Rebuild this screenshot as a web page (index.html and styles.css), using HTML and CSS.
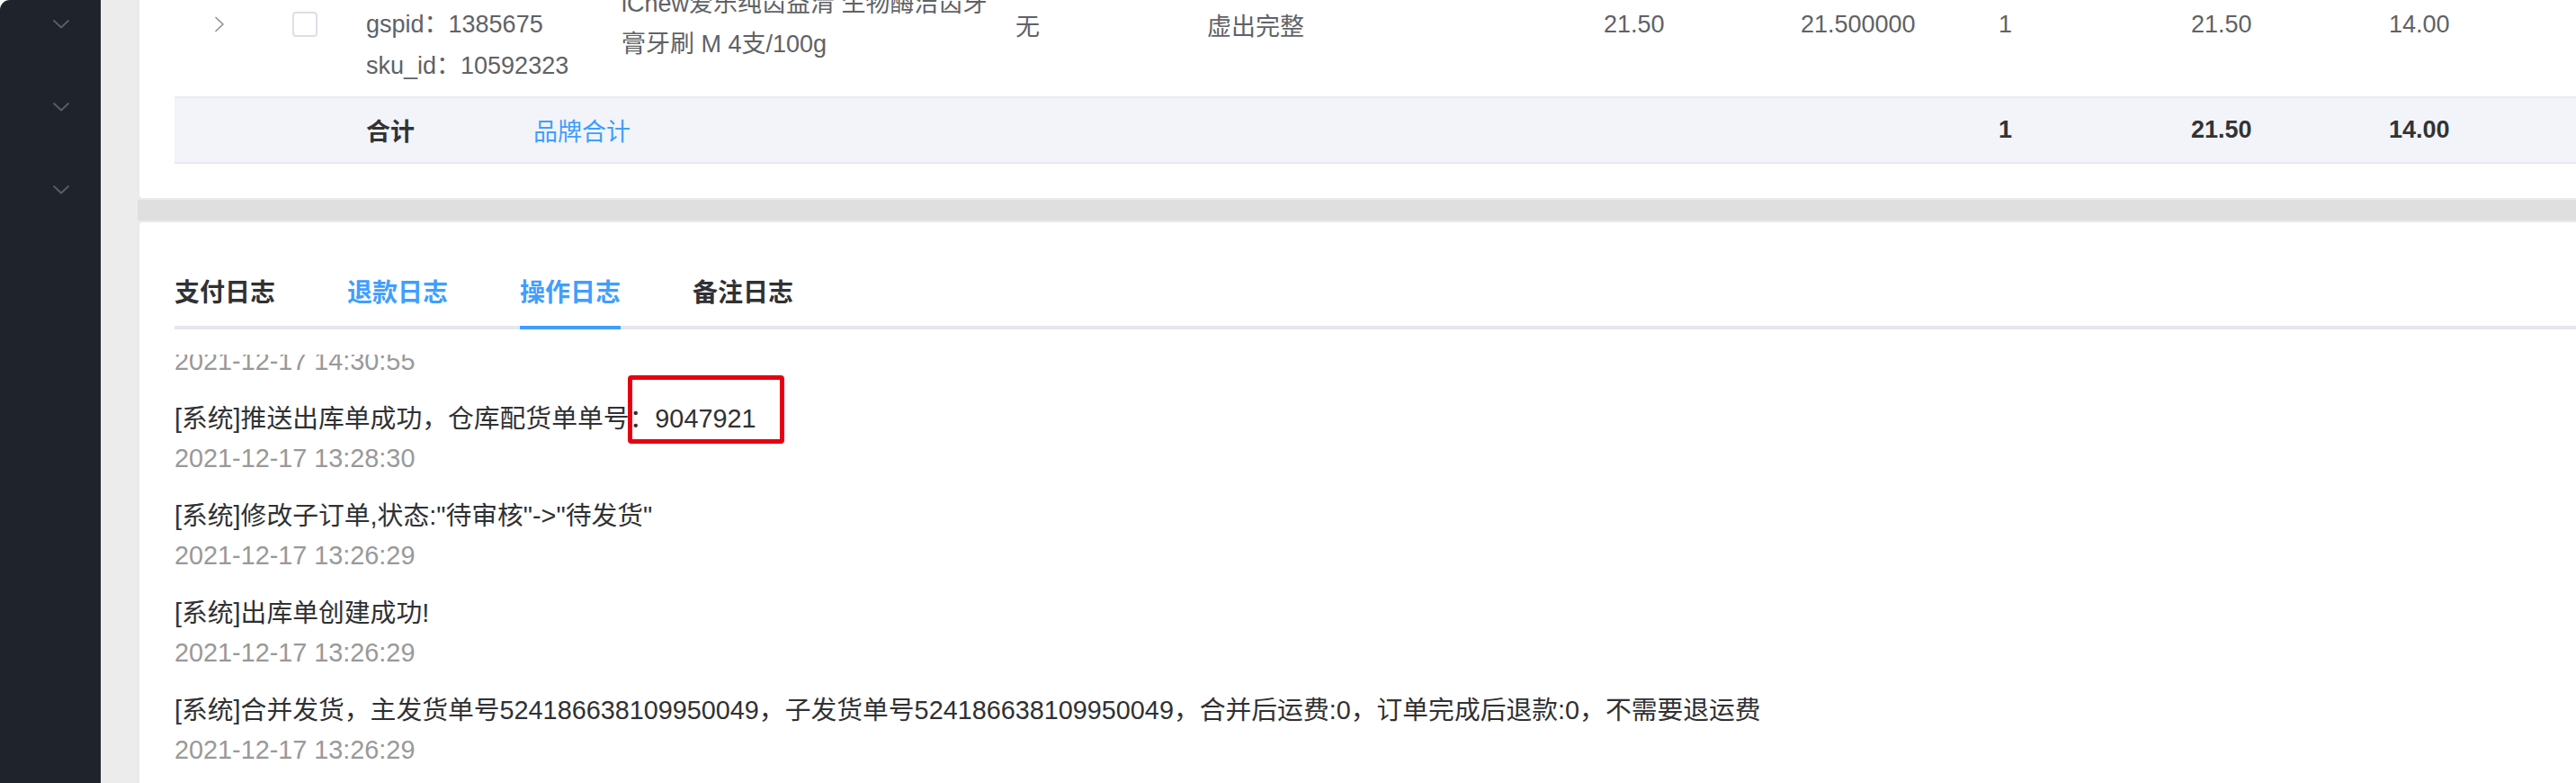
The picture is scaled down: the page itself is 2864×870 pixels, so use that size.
FILE: index.html
```html
<!DOCTYPE html>
<html lang="zh-CN">
<head>
<meta charset="utf-8">
<title>订单详情</title>
<link rel="stylesheet" href="styles.css">
</head>
<body>
<div class="app">
  <aside class="sidebar">
    <div class="menu-item first"><svg class="chev" width="18" height="10" viewBox="0 0 18 10"><polyline points="1,1 9,8.5 17,1"/></svg></div>
    <div class="menu-item"><svg class="chev" width="18" height="10" viewBox="0 0 18 10"><polyline points="1,1 9,8.5 17,1"/></svg></div>
    <div class="menu-item"><svg class="chev" width="18" height="10" viewBox="0 0 18 10"><polyline points="1,1 9,8.5 17,1"/></svg></div>
  </aside>
  <main class="main">
    <section class="card card-goods">
      <div class="table">
        <div class="row data-row">
          <div class="cell cell-center"><svg class="expand" width="12" height="18" viewBox="0 0 12 18"><polyline points="2,1.5 10,9 2,16.5"/></svg></div>
          <div class="cell cell-center"><span class="checkbox"></span></div>
          <div class="cell cell-ids">
            <div>gspid：1385675</div>
            <div>sku_id：10592323</div>
          </div>
          <div class="cell cell-name">iChew爱乐纯齿益清 生物酶洁齿牙<br>膏牙刷 M 4支/100g</div>
          <div class="cell">无</div>
          <div class="cell">虚出完整</div>
          <div class="cell">21.50</div>
          <div class="cell">21.500000</div>
          <div class="cell">1</div>
          <div class="cell">21.50</div>
          <div class="cell">14.00</div>
        </div>
        <div class="row sum-row">
          <div class="cell"></div>
          <div class="cell"></div>
          <div class="cell cell-sum"><span class="sum-label">合计</span><span class="brand-link">品牌合计</span></div>
          <div class="cell"></div>
          <div class="cell"></div>
          <div class="cell"></div>
          <div class="cell"></div>
          <div class="cell"></div>
          <div class="cell strong">1</div>
          <div class="cell strong">21.50</div>
          <div class="cell strong">14.00</div>
        </div>
      </div>
    </section>
    <div class="gap-band"></div>
    <section class="card card-logs">
      <div class="tabs-nav">
        <div class="tab first">支付日志</div>
        <div class="tab hover">退款日志</div>
        <div class="tab active">操作日志</div>
        <div class="tab">备注日志</div>
      </div>
      <div class="log-scroll">
        <div class="log-list">
          <div class="log-entry partial">
            <div class="log-time">2021-12-17 14:30:55</div>
          </div>
          <div class="log-entry">
            <div class="log-text marked">[系统]推送出库单成功，仓库配货单单号：9047921<span class="mark-box"></span></div>
            <div class="log-time">2021-12-17 13:28:30</div>
          </div>
          <div class="log-entry">
            <div class="log-text">[系统]修改子订单,状态:"待审核"-&gt;"待发货"</div>
            <div class="log-time">2021-12-17 13:26:29</div>
          </div>
          <div class="log-entry">
            <div class="log-text">[系统]出库单创建成功!</div>
            <div class="log-time">2021-12-17 13:26:29</div>
          </div>
          <div class="log-entry">
            <div class="log-text">[系统]合并发货，主发货单号524186638109950049，子发货单号524186638109950049，合并后运费:0，订单完成后退款:0，不需要退运费</div>
            <div class="log-time">2021-12-17 13:26:29</div>
          </div>
        </div>
      </div>
    </section>
  </main>
</div>
</body>
</html>
```
FILE: styles.css
```css
* { box-sizing: border-box; }
html, body { margin: 0; padding: 0; }
body {
  background: #ffffff;
  font-family: "Liberation Sans", "Noto Sans CJK SC", sans-serif;
  color: #303133;
}
.app {
  display: flex;
  width: 2864px;
  height: 870px;
  overflow: hidden;
}
.sidebar {
  width: 112px;
  flex: none;
  background: #1f232b;
  border-top-left-radius: 11px;
  display: flex;
  flex-direction: column;
}
.menu-item {
  height: 92px;
  flex: none;
  display: flex;
  align-items: center;
  justify-content: flex-end;
  padding-right: 35px;
}
.menu-item.first { margin-top: -19px; }
.chev polyline {
  fill: none;
  stroke: #5a5f68;
  stroke-width: 1.8;
  stroke-linecap: round;
  stroke-linejoin: round;
}
.main {
  flex: 1;
  min-width: 0;
  background: #ececec;
  padding-left: 41px;
  display: flex;
  flex-direction: column;
  overflow: hidden;
}
.card {
  background: #ffffff;
  border: 2px solid #e8eaf0;
  border-radius: 6px;
  margin-right: -120px;
  flex: none;
}
.card-goods {
  margin-top: -73px;
  padding: 18px 0 38px 39px;
}
.table {
  font-size: 27px;
  color: #606266;
}
.row {
  display: grid;
  grid-template-columns: 96px 97px 284px 438px 213px 441px 219px 220px 214px 220px 1fr;
  align-items: center;
}
.data-row {
  height: 162px;
  border-bottom: 2px solid #e9ecf2;
}
.sum-row {
  height: 73px;
  background: #f2f4f9;
  border-bottom: 2px solid #e6e9f0;
}
.cell {
  padding: 0 20px;
  white-space: nowrap;
}
.cell-center {
  display: flex;
  justify-content: center;
  align-items: center;
  padding: 0;
}
.expand polyline {
  fill: none;
  stroke: #8e9199;
  stroke-width: 1.7;
  stroke-linecap: round;
  stroke-linejoin: round;
}
.expand { margin-left: 4px; }
.checkbox {
  display: block;
  width: 28px;
  height: 28px;
  border: 2px solid #dcdfe6;
  border-radius: 4px;
  background: #ffffff;
}
.cell-ids {
  align-self: end;
  line-height: 46px;
  padding-bottom: 11px;
}
.cell-name {
  line-height: 45px;
}
.cell-sum {
  overflow: visible;
}
.sum-label {
  font-weight: 700;
  color: #333333;
}
.brand-link {
  color: #409eff;
  margin-left: 132px;
}
.strong {
  font-weight: 700;
  color: #333333;
}
.gap-band {
  flex: none;
  height: 23px;
  background: #dfdfdf;
  margin-right: -120px;
}
.card-logs {
  flex: 1;
  min-height: 0;
  padding: 39px 0 0 39px;
  display: flex;
  flex-direction: column;
  border-bottom: none;
  border-bottom-left-radius: 0;
}
.tabs-nav {
  display: flex;
  border-bottom: 4px solid #e4e7ed;
  margin-bottom: 28px;
  flex: none;
}
.tab {
  height: 76px;
  line-height: 80px;
  padding: 0 40px;
  font-size: 28px;
  font-weight: 700;
  color: #303133;
  margin-bottom: -4px;
  border-bottom: 4px solid transparent;
  box-sizing: content-box;
}
.tab.first { padding-left: 0; }
.tab.hover { color: #409eff; }
.tab.active {
  color: #409eff;
  padding: 0;
  margin: 0 40px -4px;
  border-bottom-color: #409eff;
}
.log-scroll {
  flex: 1;
  min-height: 0;
  overflow: hidden;
}
.log-list {
  margin-top: -15px;
}
.log-entry {
  margin-bottom: 20px;
  font-size: 28.8px;
}
.log-text {
  line-height: 44px;
  color: #303133;
  white-space: nowrap;
}
.log-text.marked {
  position: relative;
}
.mark-box {
  position: absolute;
  left: 504px;
  top: -26px;
  width: 174px;
  height: 76px;
  border: 5px solid #e60012;
  border-radius: 4px;
}
.log-time {
  line-height: 44px;
  color: #999999;
  white-space: nowrap;
}
```
